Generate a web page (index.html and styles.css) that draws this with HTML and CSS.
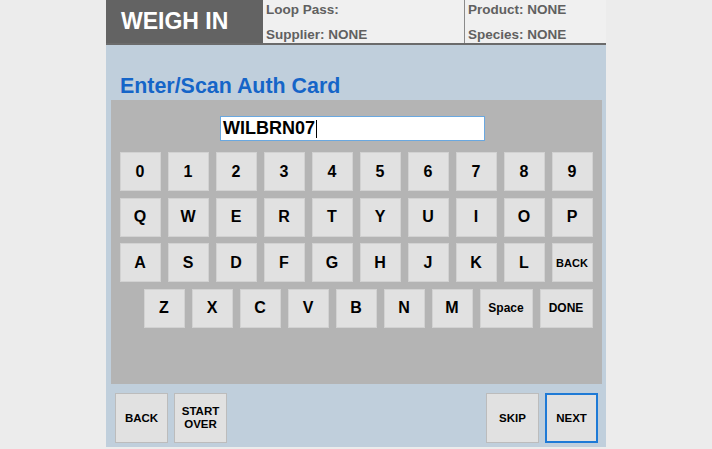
FILE: index.html
```html
<!DOCTYPE html>
<html lang="en">
<head>
    <meta charset="UTF-8">
    <title>Weigh In - Auth Card</title>
    <link rel="stylesheet" href="styles.css">
</head>
<body>
    <div class="app">
        <div class="header">
            <div class="screen-title">WEIGH IN</div>
            <div class="info-col info-left">
                <div class="info-line">Loop Pass:</div>
                <div class="info-line">Supplier: NONE</div>
            </div>
            <div class="info-col">
                <div class="info-line">Product: NONE</div>
                <div class="info-line">Species: NONE</div>
            </div>
        </div>

        <div class="content">
            <h1 class="prompt">Enter/Scan Auth Card</h1>

            <div class="keypad">
                <div class="entry"><span class="entry-text">WILBRN07</span><span class="caret"></span></div>

                <div class="key-row">
                    <button class="key">0</button>
                    <button class="key">1</button>
                    <button class="key">2</button>
                    <button class="key">3</button>
                    <button class="key">4</button>
                    <button class="key">5</button>
                    <button class="key">6</button>
                    <button class="key">7</button>
                    <button class="key">8</button>
                    <button class="key">9</button>
                </div>
                <div class="key-row">
                    <button class="key">Q</button>
                    <button class="key">W</button>
                    <button class="key">E</button>
                    <button class="key">R</button>
                    <button class="key">T</button>
                    <button class="key">Y</button>
                    <button class="key">U</button>
                    <button class="key">I</button>
                    <button class="key">O</button>
                    <button class="key">P</button>
                </div>
                <div class="key-row">
                    <button class="key">A</button>
                    <button class="key">S</button>
                    <button class="key">D</button>
                    <button class="key">F</button>
                    <button class="key">G</button>
                    <button class="key">H</button>
                    <button class="key">J</button>
                    <button class="key">K</button>
                    <button class="key">L</button>
                    <button class="key key-small">BACK</button>
                </div>
                <div class="key-row key-row-last">
                    <button class="key">Z</button>
                    <button class="key">X</button>
                    <button class="key">C</button>
                    <button class="key">V</button>
                    <button class="key">B</button>
                    <button class="key">N</button>
                    <button class="key">M</button>
                    <button class="key key-wide key-mid">Space</button>
                    <button class="key key-wide key-mid">DONE</button>
                </div>
            </div>

            <div class="nav">
                <button class="nav-btn">BACK</button>
                <button class="nav-btn">START<br>OVER</button>
                <div class="nav-spacer"></div>
                <button class="nav-btn">SKIP</button>
                <button class="nav-btn nav-active">NEXT</button>
            </div>
        </div>
    </div>
</body>
</html>
```

FILE: styles.css
```css
body {
    margin: 0;
    background-color: #ececec;
    font-family: 'Liberation Sans', Arial, sans-serif;
}
.app {
    width: 500px;
    height: 447px;
    margin: 0 auto;
    display: flex;
    flex-direction: column;
    background-color: #c0cfdc;
}
.header {
    display: flex;
    height: 43px;
    background-color: #f0f0f0;
    border-bottom: 2px solid #6b6b6b;
}
.screen-title {
    width: 142px;
    padding-left: 15px;
    background-color: #636363;
    color: #fff;
    font-size: 23px;
    font-weight: bold;
    line-height: 43px;
}
.info-col {
    display: flex;
    flex-direction: column;
    justify-content: space-between;
    padding: 1px 0 0 3px;
    flex: 1;
    color: #606060;
    font-size: 13.5px;
    font-weight: bold;
}
.info-left {
    flex: 0 0 198px;
    border-right: 1px solid #8a8a8a;
}
.info-line {
    line-height: 17px;
}
.content {
    flex: 1;
    display: flex;
    flex-direction: column;
    padding: 0 4px 0 5px;
}
.prompt {
    margin: 29px 0 2px 9px;
    font-size: 21.4px;
    line-height: 24px;
    color: #1565c8;
}
.keypad {
    height: 284px;
    box-sizing: border-box;
    padding: 16px 0 0 9px;
    background-color: #b4b4b4;
}
.entry {
    display: flex;
    align-items: center;
    width: 261px;
    height: 23px;
    margin: 0 0 11px 100px;
    padding-left: 2px;
    background-color: #fff;
    border: 1px solid #6aa8e0;
}
.entry-text {
    font-size: 18px;
    font-weight: bold;
    color: #000;
}
.caret {
    width: 1px;
    height: 18px;
    margin-left: 1px;
    background-color: #000;
}
.key-row {
    display: flex;
    gap: 7px;
    margin-bottom: 6.5px;
}
.key-row-last {
    padding-left: 24px;
}
.key {
    width: 41px;
    height: 39px;
    padding: 0 1px 0 0;
    box-sizing: border-box;
    background-color: #e1e1e1;
    border: 1px solid #d2d2d2;
    border-radius: 0;
    font-family: inherit;
    font-size: 16px;
    font-weight: bold;
    color: #000;
}
.key-small {
    font-size: 11px;
}
.key-mid {
    font-size: 12px;
}
.key-wide {
    width: 53px;
}
.nav {
    display: flex;
    gap: 6px;
    padding: 9px 4px 0 4px;
}
.nav-spacer {
    flex: 1;
}
.nav-btn {
    width: 53px;
    height: 50px;
    padding: 0;
    box-sizing: border-box;
    background-color: #e1e1e1;
    border: 1px solid #bcbcbc;
    border-radius: 0;
    font-family: inherit;
    font-size: 11.5px;
    font-weight: bold;
    line-height: 13px;
    color: #000;
}
.nav-active {
    border: 2px solid #1e7ad6;
}
```
